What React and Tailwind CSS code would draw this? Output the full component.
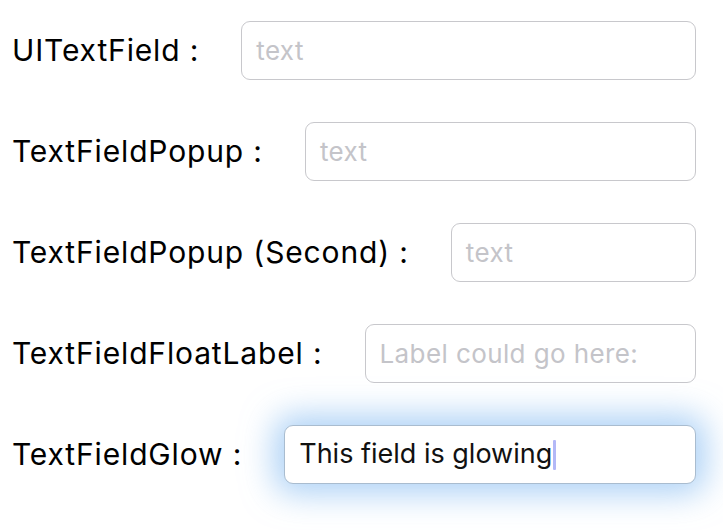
import React from "react";

const rows = [
  { label: "UITextField :", placeholder: "text" },
  { label: "TextFieldPopup :", placeholder: "text" },
  { label: "TextFieldPopup (Second) :", placeholder: "text" },
  { label: "TextFieldFloatLabel :", placeholder: "Label could go here:" },
];

function Field({ placeholder }) {
  return (
    <div className="flex-1 h-[59px] flex items-center pl-[14px] rounded-[9px] border border-[#c8c8cc] bg-white">
      <span className="text-[26px] tracking-[0.4px] text-[#c4c4c9]">{placeholder}</span>
    </div>
  );
}

export default function App() {
  return (
    <div
      className="w-[723px] h-[530px] bg-white overflow-hidden flex flex-col gap-[42px] pt-[21px] pl-[12px] pr-[27px]"
      style={{ fontFamily: "Inter, 'Liberation Sans', sans-serif" }}
    >
      {rows.map((r) => (
        <div key={r.label} className="flex items-center gap-[42px]">
          <span className="text-[30px] tracking-[0.85px] text-black whitespace-nowrap">{r.label}</span>
          <Field placeholder={r.placeholder} />
        </div>
      ))}

      {/* glowing field */}
      <div className="flex items-center gap-[42px]">
        <span className="text-[30px] tracking-[0.85px] text-black whitespace-nowrap">TextFieldGlow :</span>
        <div className="flex-1 h-[59px] flex items-center pl-[14px] rounded-[9px] border border-[#a9bccf] bg-white shadow-[0_0_32px_10px_rgba(120,180,240,0.6)]">
          <span className="text-[27px] text-[#111]">This field is glowing</span>
          <span className="ml-[1px] w-[3px] h-[30px] rounded-[1px] bg-[#b3b8f7]" />
        </div>
      </div>
    </div>
  );
}
